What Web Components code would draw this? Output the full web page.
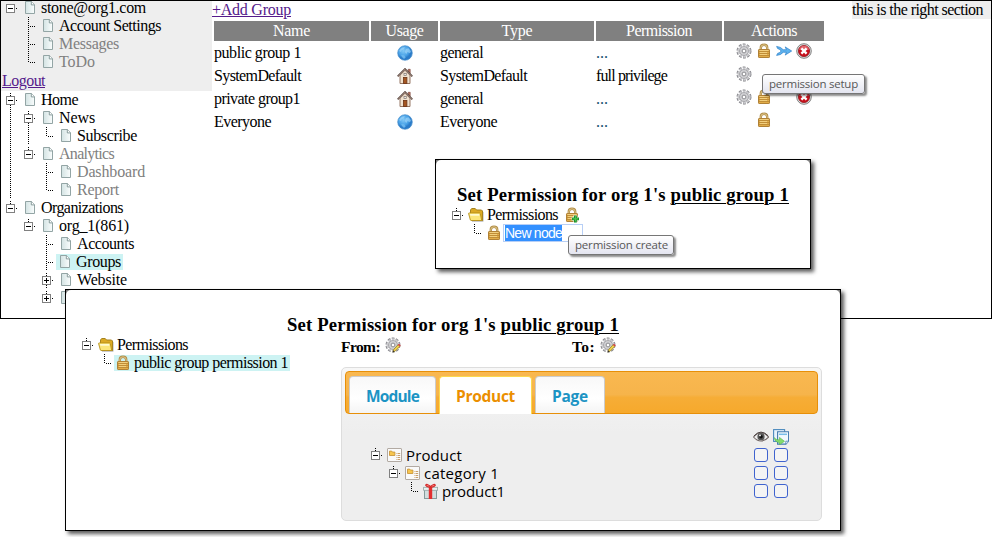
<!DOCTYPE html>
<html lang="en">
<head>
<meta charset="utf-8">
<title>Groups</title>
<style>
body{margin:0;background:#fff;width:992px;height:537px;overflow:hidden;position:relative;font:16px/18px "Liberation Serif",serif;color:#000}
pop-window{position:absolute}
#create{left:435px;top:159px;width:376px;height:110px}
#edit{left:65px;top:289px;width:776px;height:242px}
hover-tip{position:absolute}
.split{display:flex}
</style>
</head>
<body>
<app-frame>
  <side-panel slot="left">
    <tree-row slot="user" g="m" icon="page" w="105">stone@org1.com</tree-row>
    <tree-row slot="user" g=" t" icon="page" w="102">Account Settings</tree-row>
    <tree-row slot="user" g=" t" icon="page" w="60" dim>Messages</tree-row>
    <tree-row slot="user" g=" l" icon="page" w="36" dim>ToDo</tree-row>
    <tree-row g="b" icon="page" w="37">Home</tree-row>
    <tree-row g="vb" icon="page" w="36">News</tree-row>
    <tree-row g="vvl" icon="page" w="60">Subscribe</tree-row>
    <tree-row g="ve" icon="page" w="55" dim>Analytics</tree-row>
    <tree-row g="v t" icon="page" w="68" dim>Dashboard</tree-row>
    <tree-row g="v l" icon="page" w="42" dim>Report</tree-row>
    <tree-row g="e" icon="page" w="82">Organizations</tree-row>
    <tree-row g=" e" icon="page" w="70">org_1(861)</tree-row>
    <tree-row g="  t" icon="page" w="57">Accounts</tree-row>
    <tree-row g="  t" icon="page" w="45" hot>Groups</tree-row>
    <tree-row g="  p" icon="page" w="50">Website</tree-row>
    <tree-row g="  q" icon="page"></tree-row>
  </side-panel>
  <group-table></group-table>
  <right-section slot="right"><fit-text w="131">this is the right section</fit-text></right-section>
</app-frame>
<hover-tip style="left:762px;top:74px;width:103px"><fit-text w="89">permission setup</fit-text></hover-tip>

<pop-window id="create">
  <tree-row g="e" icon="folder" w="71">Permissions<ui-icon slot="after" name="lockadd"></ui-icon></tree-row>
  <tree-row g=" l" icon="lock"><name-field slot="after"><fit-text w="57">New node</fit-text></name-field></tree-row>
</pop-window>
<hover-tip style="left:568px;top:235px;width:106px"><fit-text w="93">permission create</fit-text></hover-tip>

<pop-window id="edit">
  <div class="split">
    <div style="width:209px">
      <tree-row g="e" icon="folder" w="71">Permissions</tree-row>
      <tree-row g=" l" icon="lock" w="154" hot>public group permission 1</tree-row>
    </div>
    <permission-editor style="margin-left:54px"></permission-editor>
  </div>
</pop-window>

<script>
const define=(name,html,init)=>customElements.define(name,class extends HTMLElement{
  connectedCallback(){
    if(this.shadowRoot)return;
    const t=document.createElement('template');
    t.innerHTML=typeof html==='function'?html(this):html;
    this.attachShadow({mode:'open'}).append(t.content.cloneNode(true));
    if(init)init(this);
  }
});

const gear=`<circle cx="8" cy="8" r="6.2" fill="none" stroke="#85858a" stroke-width="2.6" stroke-dasharray="2.6 1.3"/><circle cx="8" cy="8" r="4.5" fill="#d0d0d3" stroke="#a6a6aa"/><circle cx="8" cy="8" r="5.8" fill="none" stroke="#cbcbcf" stroke-width="1.7" stroke-dasharray="2.3 1.34"/><circle cx="8" cy="8" r="1.9" fill="#fff" stroke="#808085" stroke-width=".9"/>`;
const lock=`<path d="M4.8 7V4.8Q4.8 1.8 8 1.8T11.2 4.8V7" fill="none" stroke="#b08b45" stroke-width="2.4"/><path d="M4.8 7V4.8Q4.8 1.8 8 1.8T11.2 4.8V7" fill="none" stroke="#e8d49a" stroke-width=".8"/><rect x="2.5" y="6.5" width="11" height="8" rx=".6" fill="#e2ad49" stroke="#b08136"/><path d="M3 8.5h10M3 10.5h10M3 12.5h10" stroke="#bd8a36" stroke-width=".9"/><path d="M3.5 7.5h9M4 9.5h7M4 11.5h7" stroke="#f6d88c" stroke-width=".8"/>`;
const icons={
 page:`<path d="M3.5 1.5h6l3 3.2v8.8h-9z" fill="url(#pg)" stroke="#93a5a5"/><path d="M9.3 1.5v3.4h3.2" fill="#fff" stroke="#7b9292" stroke-width=".9"/><defs><linearGradient id="pg"><stop offset="0" stop-color="#d3e3e3"/><stop offset="1" stop-color="#fafdfd"/></linearGradient></defs>`,
 gear,lock,
 lockadd:lock+`<path d="M11.4 8.2v7.3M7.8 11.8h7.3" stroke="#fff" stroke-width="3.8"/><path d="M11.4 8.4v7M8 11.9h7" stroke="#158a25" stroke-width="2.8"/><path d="M11.4 9v5.6M8.6 11.9h5.6" stroke="#4fc74f" stroke-width="1.1"/>`,
 gearedit:gear+`<path d="M8 15l.8-2.7L13.2 7.6 15 9.3 10.4 14z" fill="#eed34b" stroke="#8c7425" stroke-width=".7"/><path d="M12.9 7.9l1.1-1.2 1.8 1.6-1.1 1.3z" fill="#d8434a"/><path d="M7.8 15.4l.6-1.8 1.1 1z" fill="#222"/>`,
 globe:`<defs><radialGradient id="gl" cx=".4" cy=".35"><stop offset="0" stop-color="#82c8f5"/><stop offset=".7" stop-color="#49a2e7"/><stop offset="1" stop-color="#2b7cc9"/></radialGradient></defs><circle cx="8" cy="8" r="7.3" fill="url(#gl)" stroke="#4b90cd" stroke-width=".7"/><path d="M2 6Q4 2 8 2.2L6.6 4.4 4.8 5 4 7zM9 4l2.6-.8 2.4 3-1 2-2.5-1.2L9.4 9 7.8 7z" fill="#a5d9fa" opacity=".6"/><path d="M4.2 10l3 .3 1.5 2L7 14Q4.8 12.8 4.2 10z" fill="#74bdf0" opacity=".8"/>`,
 home:`<path d="M3 7.2v8.3h10V7.2L8 2.3z" fill="#f1e3d0" stroke="#8c6a55" stroke-width=".9"/><path d="M11.2 1.3h2v4l-2-2z" fill="#b77461" stroke="#774136" stroke-width=".6"/><path d="M.7 8.4L8 1l7.3 7.4" fill="none" stroke="#54423c" stroke-width="1.7"/><path d="M1.2 8.2L8 1.4l6.8 6.8" fill="none" stroke="#d0b4a4" stroke-width=".7"/><rect x="6.5" y="9.4" width="3.4" height="6" fill="#a45621" stroke="#6c3416" stroke-width=".8"/><rect x="7" y="5.3" width="2.2" height="2.3" fill="#fff" stroke="#776b66" stroke-width=".7"/>`,
 merge:`<path d="M.6 3.4Q5 3.8 7.2 6.7H10.4L9.2 3.9 15.7 8 9.2 12.1 10.4 9.3H7.2Q5 12.2.6 12.4L1.6 10.4Q3.8 10 5.2 8 3.8 6 1.6 5.5z" fill="#5db2ee" stroke="#2d7fc8" stroke-width=".7"/>`,
 del:`<circle cx="8" cy="8" r="7.3" fill="#ddd" stroke="#777" stroke-width=".9"/><circle cx="8" cy="8" r="5.6" fill="#c8101c" stroke="#8d0d14" stroke-width=".7"/><path d="M3 7Q4 3 8 2.8T13 7Q8 5.5 3 7z" fill="#e2626a"/><path d="M5.4 5.4l5.2 5.2M10.6 5.4l-5.2 5.2" stroke="#fff" stroke-width="2.3"/>`,
 folder:`<path d="M14.4 5.1h1V14.5H4v-1z" fill="#777" opacity=".75"/><path d="M2.5 12.5V3L3.7 1.5h3.5L8.6 3h4.9l1 1v9.5h-11z" fill="#dba923" stroke="#a58320"/><path d="M.6 6.6Q.5 5.9 1.3 5.9h10.2q.6 0 .8.7l1.4 6.9H3.2q-.7 0-.9-.7z" fill="#fbe679" stroke="#b8921d" stroke-width=".9"/><path d="M2 7h9l.4 1.8H2.4z" fill="#fffbd0"/>`,
 category:`<rect x=".5" y="1.5" width="14" height="13" rx=".5" fill="#fafafa" stroke="#b2aaa3"/><path d="M2.5 4.1h2.2l.8 1H7.9v3.4H2.5z" fill="#f7c64e" stroke="#c9963b" stroke-width=".9"/><path d="M9.5 6.5h3.7M9.5 8.5h3.7M9.5 10.5h3.7M9.5 12.5h3.7" stroke="#c99f6a" stroke-dasharray="1 .5 3 0"/>`,
 gift:`<rect x="1.5" y="6.5" width="12" height="9" fill="#d2dede" stroke="#859b9b"/><rect x=".6" y="4.3" width="14" height="3" fill="#eaf1f1" stroke="#93a5a5" stroke-width=".8"/><rect x="5.8" y="4" width="3.4" height="12" fill="#e2302f"/><path d="M7.5 4Q3.7 4.5 2.7 2.3 3.6.1 7.5 3.4 11.4.1 12.3 2.3 11.3 4.5 7.5 4z" fill="#f58480" stroke="#d42c2c" stroke-width="1.2"/>`,
 eye:`<path d="M.5 8Q4 3.7 8 3.7T15.6 8Q12 12 8 12T.5 8z" fill="#eee" stroke="#706563" stroke-width="1.1"/><circle cx="8" cy="7.7" r="3.6" fill="#555"/><circle cx="8" cy="7.7" r="1.8" fill="#111"/><circle cx="7" cy="6.4" r=".9" fill="#fff"/><path d="M1 7Q4.5 3.1 8 3.1t7 3.6" fill="none" stroke="#4a4040" stroke-width="1"/>`,
 copy:`<rect x=".6" y=".6" width="11" height="11.8" fill="#e7f3fc" stroke="#4b89bd" stroke-width="1.1"/><path d="M4.6 2.8h11v9.4l-2.7 2.9H4.6z" fill="#f1f8fd" stroke="#4279ad" stroke-width="1.1"/><path d="M6 5.3h8" stroke="#78bde9" stroke-width="1.5"/><path d="M12.8 15v-2.8h2.8" fill="#fff" stroke="#4279ad" stroke-width=".8"/><path d="M1.3 8.6q1 2.3 5.2 2.3V8.4l5 3.9-5 3.4v-2.2Q2 13.5 1.3 8.6z" fill="#83db6e" stroke="#55b646" stroke-width=".6"/>`
};
define('ui-icon',el=>`<style>:host{display:block;width:16px;height:16px;flex:none}svg{display:block}</style><svg width="16" height="16" viewBox="0 0 16 16">${icons[el.getAttribute('name')]||''}</svg>`);

/* One 18px tree guide: v line, t tee, l elbow; boxes: m alone, e line above, b line above and below, p/q plus */
const guide=c=>{
  let s='';
  const v=(a,b)=>`<path d="M8.5 ${a}V${b}" stroke="#000" stroke-dasharray="1 1"/>`;
  if(c==='v')s=v(0,18);
  if(c==='t')s=v(0,18)+'<path d="M10 9.5H15" stroke="#000" stroke-dasharray="1 1"/>';
  if(c==='l')s=v(0,10)+'<path d="M10 9.5H15" stroke="#000" stroke-dasharray="1 1"/>';
  if('mebpq'.includes(c)){
    if('ebpq'.includes(c))s+=v(2,5);
    if('bp'.includes(c))s+=v(14,18);
    s+='<rect x="4.5" y="5.5" width="8" height="8" fill="#fff" stroke="#808080"/><path d="M6 9.5h5" stroke="#000"/><path d="M14 9.5h1" stroke="#000"/>';
    if('pq'.includes(c))s+='<path d="M8.5 7v5" stroke="#000"/>';
  }
  return `<svg width="18" height="18" shape-rendering="crispEdges">${s}</svg>`;
};
define('tree-row',el=>`<style>
:host{display:flex;height:18px;white-space:nowrap}
:host([dim]){color:#808080}
svg{display:block;flex:none}
.node{display:flex;height:18px}
.node ui-icon{margin:1px 0 0 2px}
fit-text{margin-left:3px}
:host([hot]) .node{background:#cdf3f3;height:16px;margin-top:1px;padding-right:2px;line-height:16px}
:host([hot]) .node ui-icon{margin:0 0 0 1px}
::slotted(ui-icon){margin:1px 0 0 6px}
</style>${[...el.getAttribute('g')].map(guide).join('')}<div class="node"><ui-icon name="${el.getAttribute('icon')}"></ui-icon>${el.hasAttribute('w')?`<fit-text w="${el.getAttribute('w')}">${el.firstChild.textContent}</fit-text>`:''}</div><slot name="after"></slot>`);

define('side-panel',`<style>
:host{display:block;width:211px}
.user{background:#eee;height:90px;overflow:hidden}
.rows{margin:-2px 0 0 1px}
a{color:#551a8b;display:block;margin:1px 0 0 1px;line-height:18px}
.nav{padding-left:1px}
</style><div class="user"><div class="rows"><slot name="user"></slot></div><a><fit-text w="43" line>Logout</fit-text></a></div><div class="nav"><slot></slot></div>`);

define('app-frame',`<style>
:host{display:grid;grid-template-columns:211px 1fr 139px;box-sizing:border-box;width:992px;height:319px;border:1px solid #000;overflow:hidden;align-items:start}
</style><slot name="left"></slot><slot></slot><slot name="right"></slot>`);

define('right-section','<style>:host{display:block;background:#eee;height:18px;line-height:17px}</style><slot></slot>');

const rows=[
 ['public group 1',87,'globe','general',43,'...',['gear','lock','merge','del']],
 ['SystemDefault',87,'home','SystemDefault',87,'full privilege',['gear','','','']],
 ['private group1',86,'home','general',43,'...',['gear','lock','','del']],
 ['Everyone',57,'globe','Everyone',57,'...',['','lock','','']]];
define('group-table',`<style>
:host{display:block}
a{color:#551a8b;display:block;height:20px;line-height:17px}
.grid{display:grid;grid-template-columns:155px 67px 154px 126px 100px;grid-template-rows:20px repeat(4,21px);gap:2px;margin-left:2px}
.h{background:#808080;color:#fff;text-align:center;line-height:20px}
.c{line-height:20px}
.u{display:flex;justify-content:center;padding-top:2px}
.a{display:flex;padding-left:10px}
.a div{width:20px;display:flex;justify-content:center}
.k{color:#134f6e}
</style><a><fit-text w="79" line>+Add Group</fit-text></a><div class="grid">${[['Name',37],['Usage',38],['Type',31],['Permission',66],['Actions',46]].map(h=>`<div class="h"><fit-text w="${h[1]}">${h[0]}</fit-text></div>`).join('')}${rows.map(r=>`<div class="c"><fit-text w="${r[1]}">${r[0]}</fit-text></div><div class="u"><ui-icon name="${r[2]}"></ui-icon></div><div class="c"><fit-text w="${r[4]}">${r[3]}</fit-text></div><div class="c ${r[5]==='...'?'k':''}"><fit-text w="${r[5]==='...'?12:71}">${r[5]}</fit-text></div><div class="a">${r[6].map(i=>`<div>${i?`<ui-icon name="${i}"></ui-icon>`:''}</div>`).join('')}</div>`).join('')}</div>`);

define('hover-tip',`<style>
:host{display:block;box-sizing:border-box;height:20px;border:1px solid #767676;border-radius:3px;background:linear-gradient(#fff,#e4e5f0);box-shadow:2px 2px 2px rgba(0,0,0,.45);padding-left:6px;font:11.5px/18px "Open Sans",sans-serif;color:#575757}
</style><slot></slot>`);

define('name-field',`<style>
:host{display:block;box-sizing:border-box;width:80px;height:18px;border:1px solid #7da7ee;outline:1px solid #b7cff6;outline-offset:-1px;background:#fff;padding:0 1px;margin-left:1px;font:14px/16px "Liberation Sans",sans-serif;color:#fff}
span{display:inline-block;background:#3390ff;height:16px;vertical-align:top}
</style><span><slot></slot></span>`);

define('pop-window',`<style>
:host{display:block;box-sizing:border-box;border:1px solid #000;background:#808080;box-shadow:3px 3px 4px rgba(0,0,0,.65)}
.in{box-sizing:border-box;background:#fff;border-radius:5px 5px 0 0;height:100%;padding:25px 0 0 12px}
h3{margin:0 0 2px -12px;text-align:center;font-size:18.7px;line-height:19px}
u{text-decoration-thickness:1px;text-underline-offset:2px}
</style><div class="in"><h3><fit-text w="332">Set Permission for org 1's <u>public group 1</u></fit-text></h3><slot></slot></div>`);

define('tab-item',`<style>
:host{display:block;box-sizing:border-box;height:37px;border:1px solid #ccc;border-bottom:0;border-radius:4px 4px 0 0;background:linear-gradient(#f8f8f8,#fff 60%,#f4f4f4);color:#1c94c4;font:700 15.5px/38px "Open Sans",sans-serif;text-align:center}
:host([active]){height:38px;background:#fff;border-color:#fbd850;color:#eb8f00}
</style><slot></slot>`);

define('check-pair',`<style>
:host{display:flex;gap:6px;height:18px;padding:2px 0 0 0;box-sizing:border-box}
i{box-sizing:border-box;width:14px;height:14px;border:1px solid #3f63cf;border-radius:3px;background:#f4f4f4}
</style><i></i><i></i>`);

define('permission-editor',`<style>
:host{display:block;width:481px}
.dates{display:flex;font-weight:bold;font-size:15.5px;height:31px;line-height:21px}
.dates ui-icon{margin:1px 0 0 5px}
.box{box-sizing:border-box;width:481px;height:154px;border:1px solid #ddd;border-radius:5px;padding:3px;background:linear-gradient(#f7f7f7,#f0f0f0 45px,#eee 65px)}
.bar{box-sizing:border-box;height:43px;border:1px solid #e78f08;border-radius:4px;background:linear-gradient(#f9b850,#f6b44b 55%,#f6ad37 62%,#f6a92c);display:flex;gap:3px;padding:4px 0 0 3px}
.body{display:flex;justify-content:space-between;padding:15px 29px 0 22px;font:15px/18px "Open Sans",sans-serif}
.tree{padding-top:17px}
.icons{display:flex;gap:4px;margin-left:-1px}
.checks{padding-top:1px}
</style>
<div class="dates"><fit-text w="39">From:</fit-text><ui-icon name="gearedit"></ui-icon><fit-text w="23" style="margin-left:171px">To:</fit-text><ui-icon name="gearedit"></ui-icon></div>
<div class="box"><div class="bar"><tab-item style="width:87px"><fit-text w="53">Module</fit-text></tab-item><tab-item active style="width:93px"><fit-text w="59">Product</fit-text></tab-item><tab-item style="width:70px"><fit-text w="36">Page</fit-text></tab-item></div>
<div class="body"><div class="tree"><tree-row g="e" icon="category" w="56">Product</tree-row><tree-row g=" e" icon="category" w="75">category 1</tree-row><tree-row g="  l" icon="gift" w="63">product1</tree-row></div>
<div><div class="icons"><ui-icon name="eye"></ui-icon><ui-icon name="copy"></ui-icon></div><div class="checks"><check-pair></check-pair><check-pair></check-pair><check-pair></check-pair></div></div></div></div>`);

/* Text set to a given width by even letter spacing; registered last, once every host's font applies */
define('fit-text','<style>:host{display:inline-block;white-space:pre}span{display:inline-block}:host([line]) span{text-decoration:underline}</style><span><slot></slot></span>',el=>{
  const w=+el.getAttribute('w'),s=el.shadowRoot.querySelector('span'),n=el.textContent.length;
  if(!w||!n)return;
  const nat=s.getBoundingClientRect().width;
  if(nat){s.style.letterSpacing=((w-nat)/n).toFixed(4)+'px';el.style.width=w+'px';}
});
</script>
</body>
</html>
